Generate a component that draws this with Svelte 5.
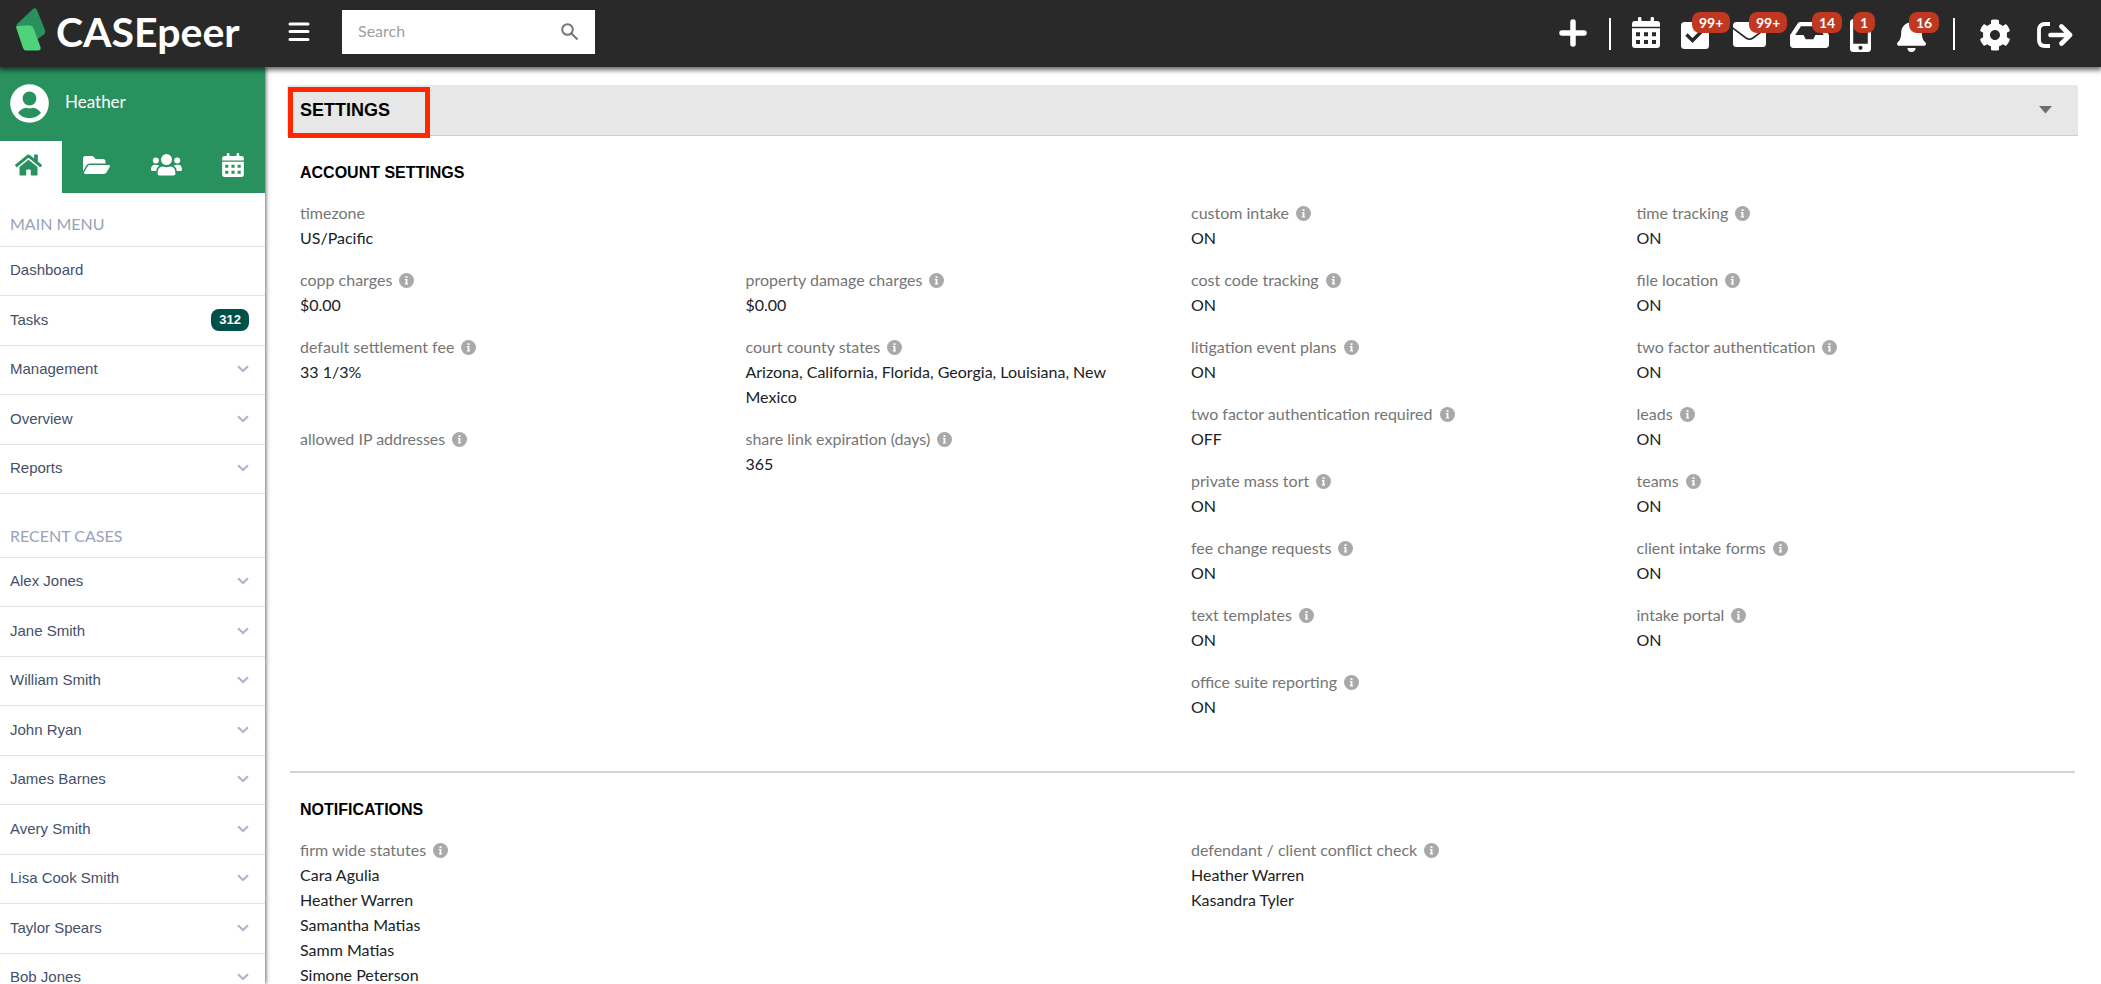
<script>
  const mainMenu = [
    { label: 'Dashboard' },
    { label: 'Tasks', count: 312 },
    { label: 'Management', expandable: true },
    { label: 'Overview', expandable: true },
    { label: 'Reports', expandable: true }
  ];

  const recentCases = [
    'Alex Jones', 'Jane Smith', 'William Smith', 'John Ryan', 'James Barnes',
    'Avery Smith', 'Lisa Cook Smith', 'Taylor Spears', 'Bob Jones'
  ].map((label) => ({ label, expandable: true }));

  const general = [
    { label: 'timezone', values: ['US/Pacific'], wide: true, plain: true },
    { label: 'copp charges', values: ['$0.00'] },
    { label: 'property damage charges', values: ['$0.00'] },
    { label: 'default settlement fee', values: ['33 1/3%'] },
    { label: 'court county states', values: ['Arizona, California, Florida, Georgia, Louisiana, New Mexico'] },
    { label: 'allowed IP addresses', values: [] },
    { label: 'share link expiration (days)', values: ['365'] }
  ];

  const features = [
    ['custom intake', 'ON'], ['time tracking', 'ON'],
    ['cost code tracking', 'ON'], ['file location', 'ON'],
    ['litigation event plans', 'ON'], ['two factor authentication', 'ON'],
    ['two factor authentication required', 'OFF'], ['leads', 'ON'],
    ['private mass tort', 'ON'], ['teams', 'ON'],
    ['fee change requests', 'ON'], ['client intake forms', 'ON'],
    ['text templates', 'ON'], ['intake portal', 'ON'],
    ['office suite reporting', 'ON']
  ].map(([label, value]) => ({ label, values: [value] }));

  const statutes = [
    {
      label: 'firm wide statutes',
      values: ['Cara Agulia', 'Heather Warren', 'Samantha Matias', 'Samm Matias', 'Simone Peterson'],
      wide: true
    }
  ];
  const conflicts = [
    { label: 'defendant / client conflict check', values: ['Heather Warren', 'Kasandra Tyler'], wide: true }
  ];

  let query = $state('');
  let open = $state(true);
</script>

{#snippet calendar(width, height)}
  <svg {width} {height} viewBox="0 0 28 31" aria-hidden="true">
    <path fill="currentColor" d="M6 4V1.200a1.200 1.200 0 0 1 1.200-1.200h1a1.200 1.200 0 0 1 1.200 1.200V4h9.200V1.200a1.200 1.200 0 0 1 1.200-1.200h1A1.200 1.200 0 0 1 22 1.200V4h3a3 3 0 0 1 3 3v2.800H0V7a3 3 0 0 1 3-3z" />
    <path fill="currentColor" fill-rule="evenodd" d="M0 11.300h28V28a3 3 0 0 1-3 3H3a3 3 0 0 1-3-3zM4 15.300v3.900h4v-3.900zM12 15.300v3.900h4v-3.900zM20 15.300v3.900h4v-3.900zM4 23v3.900h4V23zM12 23v3.900h4V23zM20 23v3.900h4V23z" />
  </svg>
{/snippet}

{#snippet infoIcon()}
  <svg class="info" width="15" height="15" viewBox="0 0 15 15" role="img" aria-label="info">
    <circle cx="7.500" cy="7.500" r="7.500" fill="#a9a9a9" />
    <path fill="#fff" d="M6.500 3.200h2v1.700h-2zM5.800 5.900h2.600v4.300h.6v1.200H5.900v-1.200h.7V7.100h-.8z" />
  </svg>
{/snippet}

{#snippet fieldList(items)}
  <dl class="fields">
    {#each items as item}
      <div class="field" class:wide={item.wide}>
        <dt>{item.label}{#if !item.plain}{@render infoIcon()}{/if}</dt>
        {#each item.values as value}<dd>{value}</dd>{/each}
      </div>
    {/each}
  </dl>
{/snippet}

{#snippet menu(title, items)}
  <nav class="menu" aria-label={title}>
    <h2>{title}</h2>
    <ul>
      {#each items as item}
        <li>
          <a href="#menu">
            <span>{item.label}</span>
            {#if item.count}<span class="count">{item.count}</span>{/if}
            {#if item.expandable}
              <svg width="12" height="8" viewBox="0 0 12 8" aria-hidden="true">
                <path d="M1 1.200l5 4.800 5-4.800" fill="none" stroke="#aeb6ca" stroke-width="2.200" />
              </svg>
            {/if}
          </a>
        </li>
      {/each}
    </ul>
  </nav>
{/snippet}

<div class="app">
  <header class="topbar">
    <a class="brand" href="#home">
      <svg width="30" height="44" viewBox="0 0 30 44" aria-hidden="true">
        <path fill="#28915e" d="M0 17L17 1q2.500-2 4 1l8 20q.8 2.500-1 4.500L21.500 31 15 19z" />
        <path fill="#4fd37a" d="M0 19q0-1.500 2-1.500h12q2.500 0 3.500 2.500l7 19q.8 3.500-2.500 3.500H10q-2 0-3-2.500z" />
      </svg>
      <span>CASEpeer</span>
    </a>
    <button class="burger" aria-label="Toggle menu">
      <svg width="22" height="20" viewBox="0 0 22 20"><path d="M2 2h18M2 9.500h18M2 17.500h18" stroke="#fff" stroke-width="3" stroke-linecap="round" /></svg>
    </button>
    <form class="search" onsubmit={(e) => e.preventDefault()}>
      <input type="search" placeholder="Search" aria-label="Search" bind:value={query} />
      <button aria-label="Search">
        <svg width="18" height="18" viewBox="0 0 18 18" fill="none" stroke="#757575" stroke-width="2">
          <circle cx="6.500" cy="6.500" r="5.300" /><path d="M10.500 10.500l6 6" />
        </svg>
      </button>
    </form>

    <div class="tools">
      <button class="slot-m" aria-label="Add">
        <svg class="tall" width="28" height="28" viewBox="0 0 28 28"><path d="M14 3v22M3 14h22" stroke="#fff" stroke-width="5.500" stroke-linecap="round" /></svg>
      </button>
      <span class="divider"></span>
      <button class="slot-m" aria-label="Calendar">{@render calendar(28, 31)}</button>
      <button class="slot-m" aria-label="Tasks">
        <svg class="low" width="28" height="27" viewBox="0 0 28 27">
          <rect width="28" height="27" rx="3.500" fill="#fff" /><path d="M5.500 12.500l6 6 9.500-9.500" fill="none" stroke="#292929" stroke-width="3.400" />
        </svg>
        <span class="badge" style:left="22px">99+</span>
      </button>
      <button class="slot-l" aria-label="Messages">
        <svg class="low" width="33" height="25" viewBox="0 0 33 25">
          <rect width="33" height="25" rx="3.500" fill="#fff" /><path d="M-1 5.500L13 16q3.500 2.600 7 0L34 5.500" fill="none" stroke="#292929" stroke-width="1.600" />
        </svg>
        <span class="badge" style:left="30px">99+</span>
      </button>
      <button class="slot-l" aria-label="Inbox">
        <svg class="low" width="39" height="26" viewBox="0 64 576 384"><path fill="#fff" d="M567.938 243.908L462.250 85.374A48.003 48.003 0 0 0 422.311 64H153.689a48 48 0 0 0-39.938 21.374L8.062 243.908A47.994 47.994 0 0 0 0 270.533V400c0 26.510 21.490 48 48 48h480c26.510 0 48-21.490 48-48V270.533a47.994 47.994 0 0 0-8.062-26.625zM162.252 128h251.497l85.333 128H376l-32 64H232l-32-64H76.918l85.334-128z" /></svg>
        <span class="badge" style:left="33px">14</span>
      </button>
      <button class="slot-s" aria-label="Texts">
        <svg class="tall" width="21" height="33" viewBox="0 0 21 33"><path fill="#fff" fill-rule="evenodd" d="M3.500 0h14A3.500 3.500 0 0 1 21 3.500v26a3.500 3.500 0 0 1-3.500 3.500h-14A3.500 3.500 0 0 1 0 29.500v-26A3.500 3.500 0 0 1 3.500 0zM3.200 3v21.800h14.600V3zM10.500 26.700a2.100 2.100 0 1 0 0 4.200 2.100 2.100 0 0 0 0-4.200z" /></svg>
        <span class="badge" style:left="14px">1</span>
      </button>
      <button class="slot-l" aria-label="Notifications">
        <svg class="tall" width="29" height="33" viewBox="0 0 448 512"><path fill="#fff" d="M224 512c35.320 0 63.970-28.650 63.970-64H160.030c0 35.350 28.650 64 63.970 64zm215.390-149.710c-19.320-20.760-55.470-51.990-55.470-154.290 0-77.700-54.480-139.900-127.940-155.160V32c0-17.670-14.320-32-31.980-32s-31.980 14.330-31.980 32v20.840C118.560 68.100 64.080 130.300 64.080 208c0 102.300-36.150 133.530-55.470 154.290-6 6.450-8.660 14.160-8.610 21.710.11 16.400 12.980 32 32.100 32h383.800c19.120 0 32-15.600 32.100-32 .05-7.550-2.610-15.270-8.610-21.710z" /></svg>
        <span class="badge" style:left="28px">16</span>
      </button>
      <span class="divider"></span>
      <button class="slot-l" aria-label="Settings">
        <svg class="tall" width="32" height="32" viewBox="0 0 512 512"><path fill="#fff" d="M487.400 315.700l-42.600-24.600c4.300-23.200 4.300-47 0-70.200l42.600-24.600c4.900-2.800 7.100-8.600 5.500-14-11.100-35.600-30-67.800-54.700-94.600-3.800-4.100-10-5.100-14.800-2.300L380.800 110c-17.900-15.400-38.500-27.300-60.800-35.100V25.800c0-5.600-3.900-10.500-9.400-11.700-36.700-8.200-74.300-7.800-109.200 0-5.500 1.200-9.400 6.100-9.400 11.700V75c-22.200 7.900-42.800 19.800-60.800 35.100L88.700 85.500c-4.900-2.800-11-1.900-14.800 2.300-24.700 26.700-43.600 58.900-54.700 94.600-1.700 5.400.6 11.200 5.500 14L67.300 221c-4.300 23.200-4.300 47 0 70.200l-42.600 24.600c-4.900 2.800-7.100 8.600-5.500 14 11.100 35.600 30 67.800 54.700 94.600 3.800 4.100 10 5.100 14.800 2.300l42.600-24.600c17.900 15.400 38.500 27.300 60.800 35.100v49.200c0 5.600 3.900 10.500 9.400 11.700 36.700 8.200 74.300 7.800 109.200 0 5.500-1.200 9.400-6.100 9.400-11.700v-49.200c22.200-7.900 42.800-19.800 60.800-35.100l42.600 24.600c4.900 2.800 11 1.900 14.800-2.300 24.700-26.700 43.600-58.900 54.700-94.600 1.500-5.500-.7-11.300-5.600-14.100zM256 336c-44.100 0-80-35.900-80-80s35.900-80 80-80 80 35.900 80 80-35.900 80-80 80z" /></svg>
      </button>
      <button class="slot-l" aria-label="Log out">
        <svg class="low" width="36" height="26" viewBox="0 0 36 26" fill="none" stroke="#fff">
          <path d="M13 2H8Q2 2 2 8v10q0 6 6 6h5" stroke-width="3.800" />
          <path d="M13.500 13H32M24.500 4.500L33 13l-8.500 8.500" stroke-width="4.600" stroke-linecap="round" stroke-linejoin="round" />
        </svg>
      </button>
    </div>
  </header>

  <div class="body">
    <aside class="sidebar">
      <div class="user">
        <svg width="39" height="39" viewBox="0 0 39 39" aria-hidden="true">
          <circle cx="19.500" cy="19.500" r="19.300" fill="#fff" />
          <circle cx="19.500" cy="14.500" r="6.900" fill="#28915e" />
          <path fill="#28915e" d="M8 29q3.500-5 8-5.200 3.500 1 7 0 4.500.2 8 5.200-4.800 5.200-11.500 5.200T8 29z" />
        </svg>
        <span>Heather</span>
      </div>
      <div class="tabs">
        <button class="active" aria-label="Home">
          <svg width="27" height="24" viewBox="0 0 576 512"><path fill="currentColor" d="M280.370 148.260L96 300.110V464a16 16 0 0 0 16 16l112.060-.29a16 16 0 0 0 15.920-16V368a16 16 0 0 1 16-16h64a16 16 0 0 1 16 16v95.640a16 16 0 0 0 16 16.050L464 480a16 16 0 0 0 16-16V300L295.670 148.260a12.190 12.190 0 0 0-15.300 0zM571.600 251.470L488 182.560V44.050a12 12 0 0 0-12-12h-56a12 12 0 0 0-12 12v72.610L318.470 43a48 48 0 0 0-61 0L4.340 251.470a12 12 0 0 0-1.600 16.900l25.500 31A12 12 0 0 0 45.150 301l235.220-193.740a12.190 12.190 0 0 1 15.300 0L530.900 301a12 12 0 0 0 16.900-1.600l25.500-31a12 12 0 0 0-1.700-16.930z" /></svg>
        </button>
        <button aria-label="Cases">
          <svg width="27" height="24" viewBox="0 0 576 512"><path fill="currentColor" d="M572.694 292.093L500.270 416.248A63.997 63.997 0 0 1 444.989 448H45.025c-18.523 0-30.064-20.093-20.731-36.093l72.424-124.155A64 64 0 0 1 152 256h399.964c18.523 0 30.064 20.093 20.730 36.093zM152 224h328v-48c0-26.510-21.490-48-48-48H272l-64-64H48C21.490 64 0 85.490 0 112v278.046l69.077-118.418C86.214 242.250 117.989 224 152 224z" /></svg>
        </button>
        <button aria-label="Contacts">
          <svg width="31" height="22" viewBox="0 0 31 22" fill="currentColor">
            <circle cx="15.500" cy="5.600" r="5.500" /><circle cx="4.800" cy="6.500" r="3" /><circle cx="26.200" cy="6.500" r="3" />
            <path d="M6.500 19.500Q6.500 12.800 12 12.600q3.500 1.300 7 0 5.500.2 5.500 6.900 0 2-2 2h-14q-2 0-2-2z" />
            <path d="M0 15.500q0-4.600 4-4.700 3 .2 4.300 1Q5.500 13.500 5.200 17H1.500Q0 17 0 15.500zM31 15.500q0-4.600-4-4.700-3 .2-4.300 1 2.800 1.700 3.100 5.200h3.700q1.500 0 1.500-1.500z" />
          </svg>
        </button>
        <button aria-label="Calendar">{@render calendar(22, 24)}</button>
      </div>
      {@render menu('MAIN MENU', mainMenu)}
      {@render menu('RECENT CASES', recentCases)}
    </aside>

    <main>
      <div class="panel-head">
        <h1>SETTINGS</h1>
        <button aria-label="Toggle settings" aria-expanded={open} onclick={() => (open = !open)}>
          <svg width="13" height="8" viewBox="0 0 13 8"><path d="M0 0h13L6.500 7.500z" fill="#6e6e6e" /></svg>
        </button>
        <span class="highlight"></span>
      </div>
      {#if open}
        <section>
          <h2>ACCOUNT SETTINGS</h2>
          <div class="halves">
            {@render fieldList(general)}
            {@render fieldList(features)}
          </div>
        </section>
        <section>
          <h2>NOTIFICATIONS</h2>
          <div class="halves">
            {@render fieldList(statutes)}
            {@render fieldList(conflicts)}
          </div>
        </section>
      {/if}
    </main>
  </div>
</div>

<style>
  :global(body) { margin: 0; background: #fff; }

  .app {
    --body-font: "Lato", sans-serif;
    --ui-font: "Liberation Sans", Arial, sans-serif;
    display: flex;
    flex-direction: column;
    height: 100vh;
    overflow: hidden;
    font: 16px/25px var(--body-font);
    color: #202124;
  }
  button { padding: 0; border: 0; background: none; font: inherit; color: inherit; cursor: pointer; }
  svg { display: block; flex: none; }
  a { color: inherit; text-decoration: none; }
  h1, h2, ul, dl, dd { margin: 0; padding: 0; }

  .topbar {
    position: relative;
    z-index: 2;
    display: flex;
    align-items: flex-start;
    box-sizing: border-box;
    height: 67px;
    padding: 0 16px;
    background: #292929;
    box-shadow: 0 2px 5px 1px rgba(0, 0, 0, .6);
    color: #fff;
  }
  .brand { display: flex; gap: 10px; width: 272px; padding-top: 8px; }
  .brand span { font-size: 41px; line-height: 48px; font-weight: 700; }
  .burger { padding-top: 22px; }
  .search {
    display: flex;
    align-items: center;
    box-sizing: border-box;
    width: 253px;
    height: 44px;
    margin: 10px 0 0 32px;
    padding: 0 16px;
    background: #fff;
  }
  .search input { flex: 1; min-width: 0; padding: 0 0 3px; border: 0; outline: 0; background: none; font: inherit; color: #333; }
  .search input::placeholder { color: #a0a0a0; opacity: 1; }

  .tools { display: flex; margin-left: auto; }
  .tools button { position: relative; display: flex; justify-content: center; height: 67px; padding-top: 17px; box-sizing: border-box; }
  .tools .low { align-self: flex-start; margin-top: 5px; }
  .tools .tall { margin-top: 2px; }
  .slot-s { width: 42px; }
  .slot-m { width: 49px; }
  .slot-l { width: 60px; }
  .divider { width: 2px; height: 32px; margin: 18px 10px 0 12px; background: #fff; }
  .badge {
    position: absolute;
    top: 12px;
    padding: 0 7px;
    border-radius: 8px;
    background: #bf381f;
    font-size: 14px;
    line-height: 21px;
    font-weight: 700;
  }

  .body { display: flex; flex: 1; min-height: 0; }
  .sidebar {
    position: relative;
    z-index: 1;
    flex: none;
    width: 265px;
    overflow: hidden;
    background: #fff;
    box-shadow: 1px 0 4px rgba(0, 0, 0, .6);
  }
  .user { display: flex; align-items: center; gap: 16px; height: 72px; padding: 0 0 2px 10px; background: #28915e; color: #fff; font-size: 17px; }
  .user span { padding-bottom: 4px; }
  .tabs { display: grid; grid-template-columns: 62px 69px 70px 1fr; height: 52px; background: #28915e; color: #fff; }
  .tabs button { display: flex; align-items: center; justify-content: center; padding-bottom: 4px; }
  .tabs .active { padding-right: 6px; background: #fff; color: #28915e; }

  .menu { padding-top: 21px; }
  .menu + .menu { padding-top: 32px; }
  .menu h2 { padding: 0 10px 12px; border-bottom: 1px solid #e2e4e8; color: #98a2ba; font-size: 16px; line-height: 20px; font-weight: 400; }
  .menu + .menu h2 { padding-bottom: 11px; }
  .menu ul { list-style: none; }
  .menu li { box-sizing: border-box; height: 49px; border-bottom: 1px solid #e2e4e8; }
  .menu li:nth-child(even) { height: 50px; }
  .menu a { display: flex; align-items: center; justify-content: space-between; box-sizing: border-box; height: 100%; padding: 0 16px 2px 10px; color: #44506a; font: 15px/20px var(--ui-font); }
  .count { padding: 0 8px; border-radius: 8px; background: #00504a; color: #fff; font-size: 13px; line-height: 22px; font-weight: 700; }

  main { flex: 1; min-width: 0; padding: 18px 23px 0 22px; overflow: hidden; }
  .panel-head {
    position: relative;
    display: flex;
    align-items: center;
    justify-content: space-between;
    height: 50px;
    padding: 0 26px 0 13px;
    border-bottom: 1px solid #cfcfcf;
    border-radius: 2px 2px 0 0;
    background: #e7e7e7;
  }
  h1, section h2 { color: #000; font-family: var(--ui-font); font-weight: 700; line-height: 20px; }
  h1 { font-size: 18px; }
  .highlight { position: absolute; top: 2px; left: 1px; width: 132px; height: 41px; border: 5px solid #ff2600; }

  section { margin: 0 3px; padding: 27px 0 0; }
  section + section { margin-top: 35px; border-top: 2px solid #d3d3d3; }
  section h2 { margin-bottom: 17px; padding-left: 10px; font-size: 16px; }
  .halves { display: grid; grid-template-columns: 1fr 1fr; padding-right: 3px; }
  .fields { display: grid; grid-template-columns: 1fr 1fr; align-content: start; }
  .field { min-height: 50px; padding: 0 30px 17px 10px; }
  .wide { grid-column: 1 / -1; }
  dt { display: flex; align-items: center; gap: 7px; color: #757575; }
  .info { margin-top: 1px; }
</style>
